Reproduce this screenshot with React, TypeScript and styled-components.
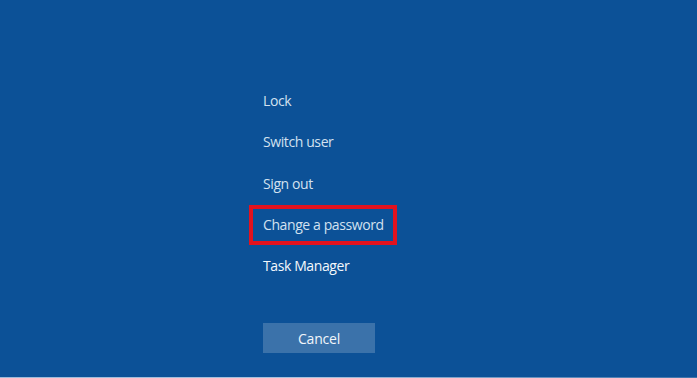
import React from "react";
import styled, { createGlobalStyle } from "styled-components";

const GlobalStyle = createGlobalStyle`
  html, body {
    margin: 0;
    padding: 0;
    background: #0c5197;
  }
  body {
    font-family: "Open Sans", "Noto Sans", "Liberation Sans", sans-serif;
  }
`;

// Styles
const Screen = styled.div`
  width: 697px;
  height: 378px;
  box-sizing: border-box;
  background: #0c5197;
  border-bottom: 1px solid transparent;
  border-image: linear-gradient(90deg, #9dbbdb 0%, #a7c2de 45%, #3c72aa 100%) 1;
  display: flex;
  flex-direction: column;
  padding: 80px 0 0 263px;
  overflow: hidden;
`;

const Menu = styled.ul`
  list-style: none;
  margin: 0;
  padding: 0;
  display: flex;
  flex-direction: column;
`;

const MenuItem = styled.li<{ $bright?: boolean; $selected?: boolean }>`
  position: relative;
  height: 41.3px;
  display: flex;
  align-items: center;
  align-self: flex-start;
  font-size: 14px;
  letter-spacing: -0.4px;
  color: ${(p) => (p.$bright ? "#f4f8fc" : "#d3e1f0")};
  white-space: nowrap;

  ${(p) =>
    p.$selected &&
    `
    &::after {
      content: "";
      position: absolute;
      left: -14px;
      right: -13px;
      top: 1px;
      bottom: 0px;
      border: 4px solid #e3121e;
    }
  `}
`;

const CancelButton = styled.button`
  margin-top: 37px;
  width: 112px;
  height: 30px;
  border: none;
  background: #3b72aa;
  color: #f2f6fb;
  font-family: inherit;
  font-size: 14px;
  letter-spacing: -0.2px;
  padding: 0;
  cursor: pointer;
`;

// Component
const items = [
  { label: "Lock" },
  { label: "Switch user" },
  { label: "Sign out" },
  { label: "Change a password", selected: true },
  { label: "Task Manager", bright: true },
];

const App: React.FC = () => {
  return (
    <>
      <GlobalStyle />
      <Screen>
        <Menu>
          {items.map((item) => (
            <MenuItem
              key={item.label}
              $bright={item.bright}
              $selected={item.selected}
            >
              {item.label}
            </MenuItem>
          ))}
        </Menu>
        <CancelButton>Cancel</CancelButton>
      </Screen>
    </>
  );
};

export default App;
